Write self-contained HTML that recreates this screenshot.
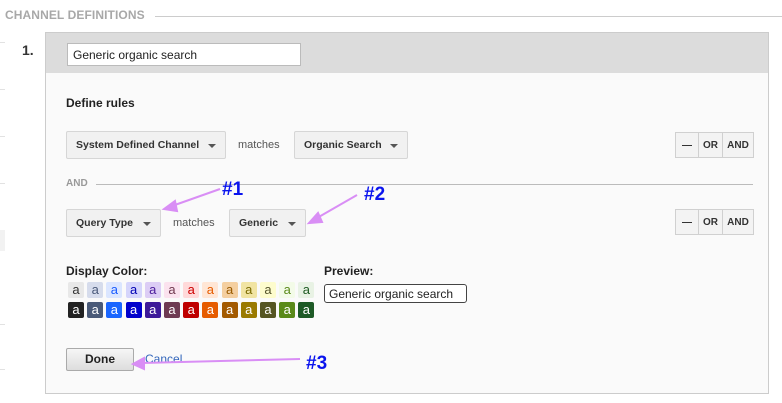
<!DOCTYPE html>
<html><head><style>
*{box-sizing:border-box;margin:0;padding:0}
body{width:782px;height:403px;background:#fff;font-family:"Liberation Sans",Arial,sans-serif;position:relative;overflow:hidden;color:#222}
.a{position:absolute}
.dd{position:absolute;height:28px;background:#f1f1f1;border:1px solid #d6d6d6;border-radius:2px;font-size:10.5px;font-weight:bold;color:#333;padding:7px 0 0 9px;white-space:nowrap}
.dd:after{content:"";position:absolute;right:9px;top:12px;border-left:4px solid transparent;border-right:4px solid transparent;border-top:4px solid #555}
.btns{position:absolute;left:675px;width:79px;height:26px;border:1px solid #d0d0d0;background:#f3f3f3;display:flex;font-size:10px;font-weight:bold;color:#333}
.btns div{border-right:1px solid #d0d0d0;display:flex;align-items:center;justify-content:center}
.btns div:last-child{border-right:none}
.sw{position:absolute;width:16px;height:16px;border-radius:2px;font-size:13px;text-align:center;line-height:15px}
.tick{position:absolute;left:0;width:5px;height:1px;background:#e2e2e2}
</style></head><body>
<div class="a" style="left:5px;top:8px;font-size:12px;font-weight:bold;color:#a8a8a8;letter-spacing:0.1px">CHANNEL DEFINITIONS</div>
<div class="a" style="left:155px;top:16px;width:627px;height:1px;background:#ccc"></div>
<div class="tick" style="top:42px"></div><div class="tick" style="top:89px"></div><div class="tick" style="top:136px"></div><div class="tick" style="top:183px"></div><div class="tick" style="top:324px"></div><div class="tick" style="top:369px"></div>
<div class="a" style="left:0;top:230px;width:5px;height:21px;background:#f2f2f2"></div>
<div class="a" style="left:22px;top:42px;font-size:14px;font-weight:bold;color:#333">1.</div>
<div class="a" style="left:45px;top:32px;width:724px;height:362px;border:1px solid #ccc;background:#fafafa"></div>
<div class="a" style="left:46px;top:33px;width:722px;height:40px;background:#dcdcdc"></div>
<div class="a" style="left:67px;top:43px;width:234px;height:23px;background:#fff;border:1px solid #bbb;font-size:12px;padding:4px 0 0 5px">Generic organic search</div>
<div class="a" style="left:66px;top:96px;font-size:12px;font-weight:bold;color:#222">Define rules</div>
<div class="dd" style="left:66px;top:131px;width:160px">System Defined Channel</div>
<div class="a" style="left:238px;top:139px;font-size:11px;color:#555">matches</div>
<div class="dd" style="left:294px;top:131px;width:114px">Organic Search</div>
<div class="btns" style="top:132px"><div style="width:23px">—</div><div style="width:24px">OR</div><div style="width:30px">AND</div></div>
<div class="a" style="left:66px;top:178px;font-size:10px;font-weight:bold;color:#999">AND</div>
<div class="a" style="left:96px;top:184px;width:657px;height:1px;background:#bbb"></div>
<div class="dd" style="left:66px;top:209px;width:95px">Query Type</div>
<div class="a" style="left:173px;top:217px;font-size:11px;color:#555">matches</div>
<div class="dd" style="left:229px;top:209px;width:77px">Generic</div>
<div class="btns" style="top:209px"><div style="width:23px">—</div><div style="width:24px">OR</div><div style="width:30px">AND</div></div>
<div class="a" style="left:66px;top:264px;font-size:12px;font-weight:bold">Display Color:</div>
<div class="a" style="left:324px;top:264px;font-size:12px;font-weight:bold">Preview:</div>
<div class="a" style="left:324px;top:284px;width:143px;height:19px;border:1px solid #444;border-radius:3px;background:#fff;font-size:12px;padding:2px 0 0 4px;color:#222">Generic organic search</div>
<div id="sw"></div>
<div class="a" style="left:66px;top:348px;width:68px;height:23px;border:1px solid #aaa;border-radius:2px;background:linear-gradient(#f6f6f6,#ddd);font-size:12px;font-weight:bold;text-align:center;line-height:21px">Done</div>
<div class="a" style="left:145px;top:352px;font-size:12px;color:#3366bb">Cancel</div>
<svg class="a" style="left:0;top:0" width="782" height="403">
<g stroke="#d98ef5" stroke-width="2" fill="#d98ef5">
<line x1="220" y1="189" x2="172" y2="206"/><polygon points="164,209 175,201 177,211"/>
<line x1="357" y1="195" x2="317" y2="218"/><polygon points="309,223 318,213 322,222"/>
<line x1="300" y1="359" x2="142" y2="363"/><polygon points="133,364 144,358 144,369"/>
</g>
<g font-family="Liberation Sans,Arial,sans-serif" font-weight="bold" font-size="19" fill="#0a14ee">
<text x="222" y="195">#1</text><text x="364" y="200">#2</text><text x="306" y="369">#3</text>
</g>
</svg>
<script>
var r1=[["#e8e8e8","#333"],["#d6dcec","#4a5a7a"],["#dbe6ff","#1a5cff"],["#d5d5fb","#0000b3"],["#dccdf5","#4a1a9a"],["#fbe2ee","#70384f"],["#ffd9d9","#c00"],["#ffe6d5","#e65c00"],["#f4cfa0","#9a5b00"],["#f1e4a3","#7a6a00"],["#fdfccd","#55552a"],["#f3fbe8","#5a8a1a"],["#e8f2e4","#1e5a22"]];
var r2=["#222","#4a5a78","#1a66ff","#0000cc","#3d1a99","#6e3a52","#bf0000","#e65c00","#a35a00","#9a7a00","#555522","#5a8a1a","#1e5a26"];
var h="";for(var i=0;i<13;i++){var x=68+i*19.2;h+='<div class="sw" style="left:'+x+'px;top:282px;background:'+r1[i][0]+';color:'+r1[i][1]+'">a</div>';h+='<div class="sw" style="left:'+x+'px;top:302px;background:'+r2[i]+';color:#fff">a</div>';}
document.getElementById("sw").outerHTML=h;
</script>
</body></html>
